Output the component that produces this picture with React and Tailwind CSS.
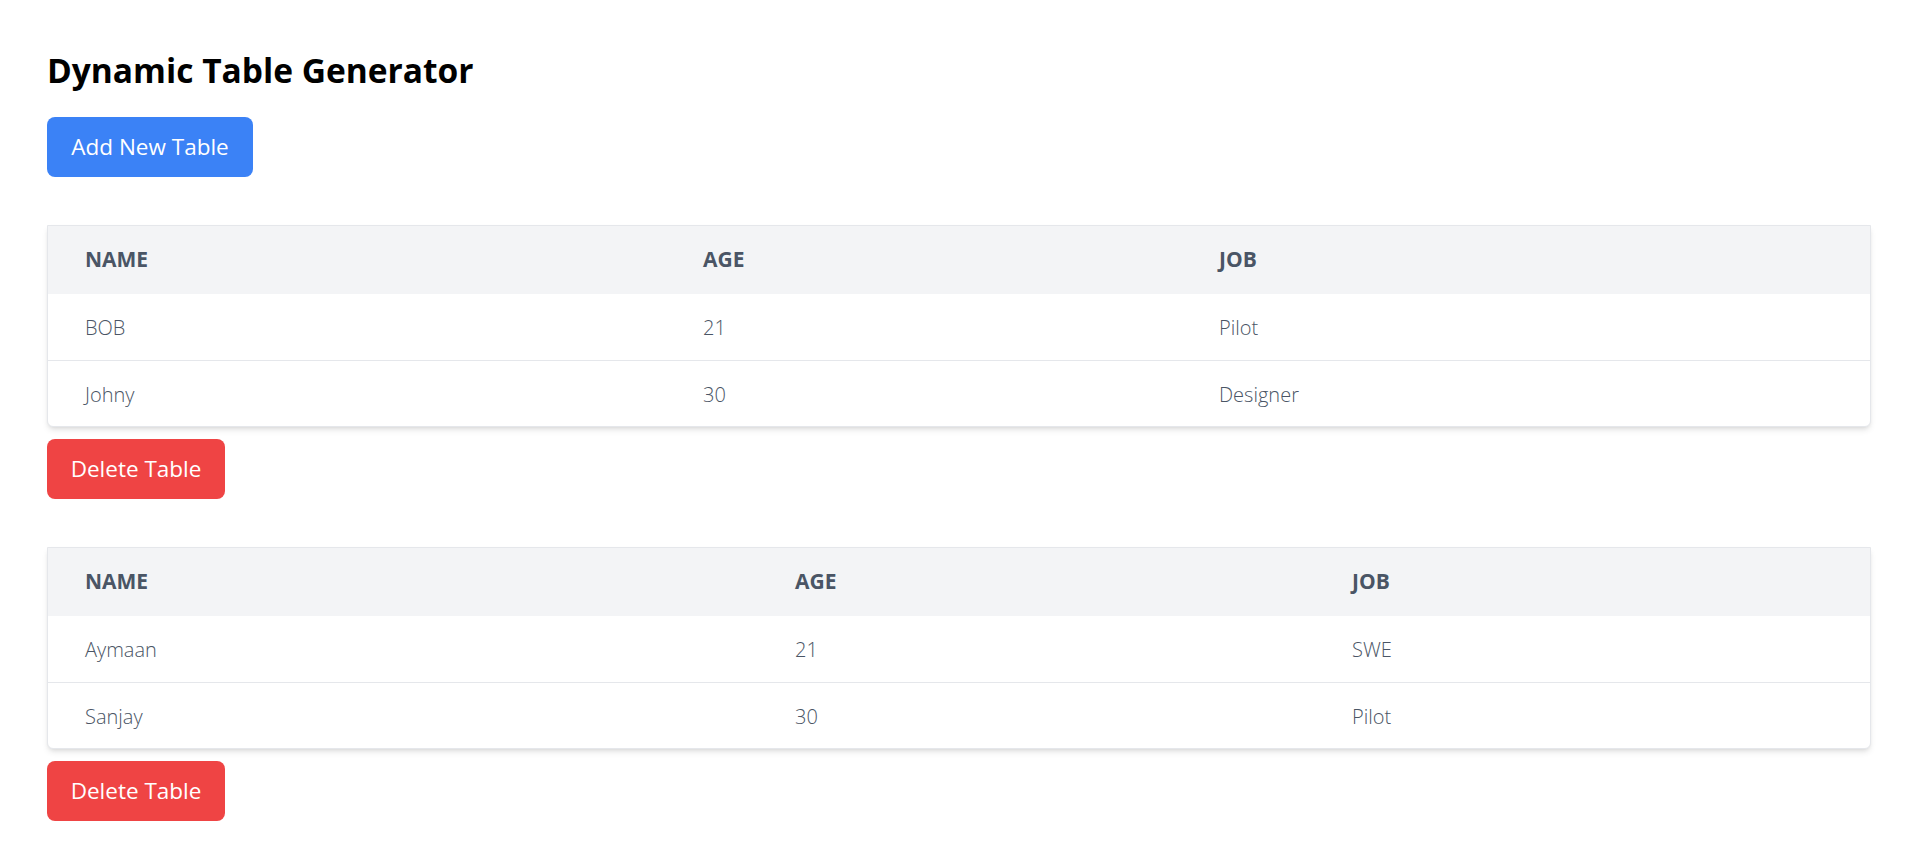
import { useState } from "react";

const initialTables = [
  {
    id: 1,
    cols: ["w-[618px]", "w-[516px]", ""],
    rows: [
      { name: "BOB", age: 21, job: "Pilot" },
      { name: "Johny", age: 30, job: "Designer" },
    ],
  },
  {
    id: 2,
    cols: ["w-[710px]", "w-[557px]", ""],
    rows: [
      { name: "Aymaan", age: 21, job: "SWE" },
      { name: "Sanjay", age: 30, job: "Pilot" },
    ],
  },
];

export default function App() {
  const [tables, setTables] = useState(initialTables);

  function addTable() {
    setTables((prev) => [
      ...prev,
      { id: Date.now(), cols: ["w-[618px]", "w-[516px]", ""], rows: [{ name: "New", age: 0, job: "-" }] },
    ]);
  }

  function deleteTable(id) {
    setTables((prev) => prev.filter((t) => t.id !== id));
  }

  return (
    <div className="min-h-screen bg-white p-[47px] pt-[48px] font-['Open_Sans',sans-serif]">
      <h1 className="text-[33.5px] font-bold leading-[45px] text-black">Dynamic Table Generator</h1>
      <button
        onClick={addTable}
        className="mt-[24px] h-[60px] w-[206px] rounded-[8px] bg-[#3b82f6] text-[22.5px] text-white"
      >
        Add New Table
      </button>

      <div className="mt-[48px] flex flex-col gap-[48px]">
        {tables.map((t) => (
          <div key={t.id}>
            <div className="rounded-b-[6px] border border-gray-200 bg-white shadow-md">
              <table className="w-full table-fixed border-collapse text-left">
                <colgroup>
                  <col className={t.cols[0]} />
                  <col className={t.cols[1]} />
                  <col className={t.cols[2]} />
                </colgroup>
                <thead className="bg-gray-100">
                  <tr>
                    <th className="h-[68px] px-[37px] text-[21px] font-bold uppercase text-gray-600">Name</th>
                    <th className="h-[68px] px-[37px] text-[21px] font-bold uppercase text-gray-600">Age</th>
                    <th className="h-[68px] px-[37px] text-[21px] font-bold uppercase text-gray-600">Job</th>
                  </tr>
                </thead>
                <tbody>
                  {t.rows.map((r, i) => (
                    <tr key={i} className={i < t.rows.length - 1 ? "border-b border-gray-200" : ""}>
                      <td className="h-[66px] px-[37px] pt-[3px] text-[20px] font-light text-gray-600">{r.name}</td>
                      <td className="h-[66px] px-[37px] pt-[3px] text-[20px] font-light text-gray-600">{r.age}</td>
                      <td className="h-[66px] px-[37px] pt-[3px] text-[20px] font-light text-gray-600">{r.job}</td>
                    </tr>
                  ))}
                </tbody>
              </table>
            </div>
            <button
              onClick={() => deleteTable(t.id)}
              className="mt-[12px] h-[60px] w-[178px] rounded-[8px] bg-[#ef4444] text-[22.5px] text-white"
            >
              Delete Table
            </button>
          </div>
        ))}
      </div>
    </div>
  );
}
